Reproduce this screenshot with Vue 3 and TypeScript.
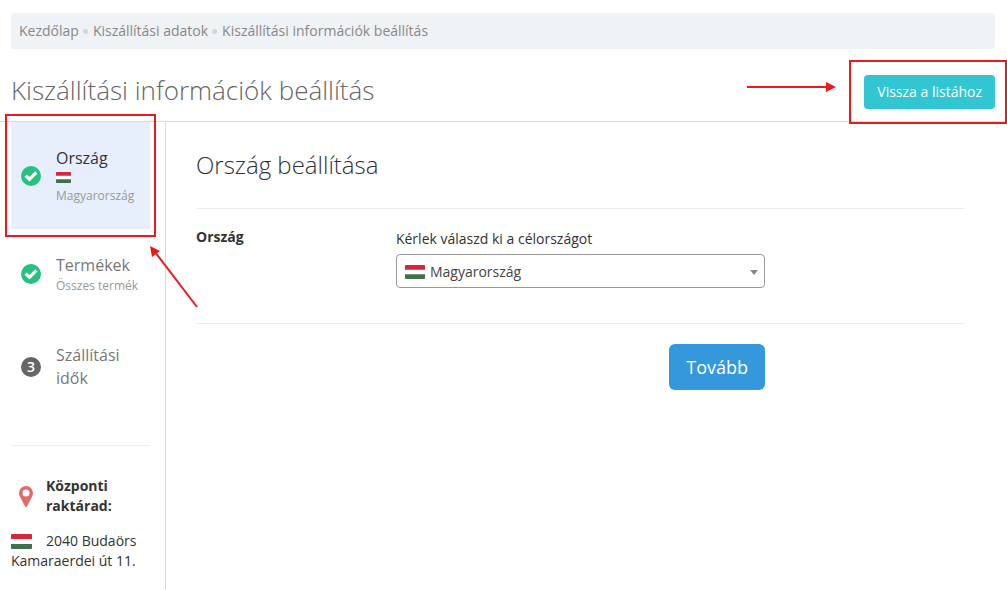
<script setup lang="ts">
import { ref } from 'vue'

interface Crumb {
  label: string
  href: string
}

interface Step {
  title: string
  note?: string
  flag?: boolean
  done: boolean
  active: boolean
}

const crumbs: Crumb[] = [
  { label: 'Kezdőlap', href: '#home' },
  { label: 'Kiszállítási adatok', href: '#shipping' },
  { label: 'Kiszállítási információk beállítás', href: '#settings' },
]

const steps: Step[] = [
  { title: 'Ország', note: 'Magyarország', flag: true, done: true, active: true },
  { title: 'Termékek', note: 'Összes termék', done: true, active: false },
  { title: 'Szállítási idők', done: false, active: false },
]

const country = ref('HU')
</script>

<template>
  <div class="page">
    <nav class="crumbs" aria-label="Navigáció">
      <template v-for="(crumb, i) in crumbs" :key="crumb.href">
        <span v-if="i > 0" class="dot"></span>
        <a :href="crumb.href">{{ crumb.label }}</a>
      </template>
    </nav>

    <header class="head">
      <h1>Kiszállítási információk beállítás</h1>
      <div class="back">
        <svg class="arrow-right" width="90" height="12" viewBox="0 0 90 12" aria-hidden="true">
          <path d="M0 6H81" stroke="#e81a1c" stroke-width="2" />
          <path d="M79 1L89 6L79 11Z" fill="#e81a1c" />
        </svg>
        <button type="button" class="btn-back">Vissza a listához</button>
      </div>
    </header>

    <div class="body">
      <aside class="side">
        <ol class="steps">
          <li v-for="(step, i) in steps" :key="step.title" class="step" :class="{ active: step.active }">
            <svg v-if="step.done" class="state" width="20" height="20" viewBox="0 0 20 20" aria-hidden="true">
              <circle cx="10" cy="10" r="10" fill="#26c281" />
              <path d="M4.6 9.6L8.5 13.2L15.4 6.4" fill="none" stroke="#fff" stroke-width="3.2" />
            </svg>
            <span v-else class="state num">{{ i + 1 }}</span>
            <div class="step-text">
              <div class="step-title">{{ step.title }}</div>
              <div v-if="step.flag" class="step-flag">
                <svg width="15" height="11" viewBox="0 0 21 15" preserveAspectRatio="none" aria-hidden="true">
                  <rect width="21" height="15" rx="1" fill="#fff" />
                  <path d="M1 0H20Q21 0 21 1V5H0V1Q0 0 1 0Z" fill="#d32839" />
                  <path d="M0 10H21V14Q21 15 20 15H1Q0 15 0 14Z" fill="#42704a" />
                </svg>
              </div>
              <div v-if="step.note" class="step-note">{{ step.note }}</div>
            </div>
            <svg v-if="step.active" class="arrow-up" width="52" height="64" viewBox="0 0 52 64" aria-hidden="true">
              <path d="M48 62L6 7" stroke="#e81a1c" stroke-width="2" />
              <path d="M1 1L11 6L3 12Z" fill="#e81a1c" />
            </svg>
          </li>
        </ol>

        <section class="depot">
          <div class="depot-head">
            <svg class="pin" width="14" height="21" viewBox="0 0 14 21" aria-hidden="true">
              <path
                d="M7 0A7 7 0 0 0 0 7C0 8.6 .5 9.7 1 10.7L6 20.2Q7 21.6 8 20.2L13 10.7C13.5 9.7 14 8.6 14 7A7 7 0 0 0 7 0ZM7 3.6A3.5 3.5 0 1 1 7 10.6A3.5 3.5 0 1 1 7 3.6Z"
                fill="#e26a6a"
              />
            </svg>
            <strong>Központi raktárad:</strong>
          </div>
          <address>
            <svg class="depot-flag" width="21" height="15" viewBox="0 0 21 15" aria-hidden="true">
              <path d="M1 0H20Q21 0 21 1V5H0V1Q0 0 1 0Z" fill="#d32839" />
              <path d="M0 10H21V14Q21 15 20 15H1Q0 15 0 14Z" fill="#42704a" />
            </svg>2040 Budaörs Kamaraerdei út 11.
          </address>
        </section>
      </aside>

      <main class="main">
        <h2>Ország beállítása</h2>
        <form class="form" @submit.prevent>
          <div class="row fields">
            <strong class="label">Ország</strong>
            <div class="field">
              <label for="country">Kérlek válaszd ki a célországot</label>
              <div class="select">
                <svg class="select-flag" width="20" height="14" viewBox="0 0 21 15" preserveAspectRatio="none" aria-hidden="true">
                  <path d="M1 0H20Q21 0 21 1V5H0V1Q0 0 1 0Z" fill="#d32839" />
                  <path d="M0 10H21V14Q21 15 20 15H1Q0 15 0 14Z" fill="#42704a" />
                </svg>
                <select id="country" v-model="country">
                  <option value="HU">Magyarország</option>
                </select>
                <svg class="caret" width="8" height="5" viewBox="0 0 8 5" aria-hidden="true">
                  <path d="M0 0H8L4 5Z" fill="#888" />
                </svg>
              </div>
            </div>
          </div>
          <div class="row actions">
            <button type="submit" class="btn-next">Tovább</button>
          </div>
        </form>
      </main>
    </div>
  </div>
</template>

<style>
body {
  margin: 0;
  background: #fff;
}
</style>

<style scoped>
.page {
  box-sizing: border-box;
  display: flex;
  flex-direction: column;
  min-height: 100vh;
  padding-top: 13px;
  overflow: hidden;
  color: #333;
  font: 14px/20px "Open Sans", "Noto Sans", sans-serif;
}

.crumbs {
  display: flex;
  align-items: center;
  margin: 0 12px 0 11px;
  padding: 8px;
  border-radius: 4px;
  background: #eff3f6;
}

.crumbs a {
  color: #888;
  text-decoration: none;
}

.dot {
  width: 5px;
  height: 5px;
  margin: 0 5px 0 4px;
  border-radius: 50%;
  background: #d2d6da;
}

.head {
  display: flex;
  align-items: flex-start;
  justify-content: space-between;
  padding: 26px 12px 12px 11px;
  border-bottom: 1px solid #dadada;
}

h1 {
  margin: 0;
  color: #666;
  font-size: 26px;
  font-weight: 300;
  line-height: 30px;
}

.back {
  position: relative;
}

.back::after {
  content: "";
  position: absolute;
  inset: -15px -12px -15px -15px;
  border: 2px solid #e81a1c;
  pointer-events: none;
}

.arrow-right {
  position: absolute;
  top: 6px;
  right: 158px;
}

button {
  border: 0;
  color: #fff;
  font-family: inherit;
  cursor: pointer;
}

.btn-back {
  display: block;
  padding: 7px 13px;
  border-radius: 4px;
  background: #32c5d2;
  font-size: 14px;
  line-height: 20px;
}

.body {
  display: flex;
  flex: 1;
}

.side {
  box-sizing: border-box;
  flex: 0 0 166px;
  padding: 0 15px 0 11px;
  border-right: 1px solid #dadada;
}

.steps {
  margin: 0;
  padding: 0 0 30px;
  border-bottom: 1px solid #eee;
  list-style: none;
}

.step {
  position: relative;
  display: flex;
  align-items: center;
  gap: 15px;
  padding: 25px 10px;
  color: #777;
}

.step.active {
  background: #e8effc;
  color: #333;
}

.step.active::after {
  content: "";
  position: absolute;
  inset: -8px -6px;
  border: 2px solid #e81a1c;
  pointer-events: none;
}

.arrow-up {
  position: absolute;
  top: 123px;
  left: 138px;
}

.state {
  flex: none;
  width: 20px;
  height: 20px;
}

.num {
  border-radius: 50%;
  background: #666;
  color: #fff;
  font-size: 14px;
  font-weight: 600;
  line-height: 20px;
  text-align: center;
}

.step-title {
  font-size: 16px;
  line-height: 23px;
}

.step-flag,
.step-note {
  color: #999;
  font-size: 12px;
  line-height: 17px;
  white-space: nowrap;
}

.step-flag {
  box-sizing: border-box;
  display: flex;
  align-items: flex-start;
  height: 17px;
  padding-top: 2px;
}

.depot {
  padding-top: 30px;
}

.depot-head {
  display: flex;
  align-items: center;
  gap: 13px;
  padding-left: 8px;
}

.pin {
  flex: none;
}

address {
  margin-top: 15px;
  font-style: normal;
}

.depot-flag {
  margin-right: 14px;
  vertical-align: -3px;
}

.main {
  flex: 1;
  padding: 0 42px 0 30px;
}

h2 {
  margin: 0;
  padding: 27px 0;
  font-size: 24px;
  font-weight: 300;
  line-height: 32px;
}

.row {
  display: grid;
  grid-template-columns: 26fr 48fr 26fr;
  border-top: 1px solid #eee;
}

.fields {
  padding: 18px 0 35px;
}

.field {
  padding-top: 2px;
}

.field label {
  display: block;
  margin-bottom: 5px;
}

.select {
  position: relative;
}

select {
  box-sizing: border-box;
  display: block;
  width: 100%;
  height: 34px;
  padding: 2px 28px 0 33px;
  border: 1px solid #999;
  border-radius: 4px;
  appearance: none;
  background: #fff;
  color: #444;
  font: inherit;
}

.select-flag {
  position: absolute;
  top: 11px;
  left: 9px;
}

.caret {
  position: absolute;
  top: 16px;
  right: 7px;
  pointer-events: none;
}

.actions {
  padding-top: 20px;
}

.btn-next {
  grid-column: 2;
  justify-self: end;
  padding: 11px 17px;
  border-radius: 6px;
  background: #3598dc;
  font-size: 18px;
  line-height: 24px;
}
</style>
